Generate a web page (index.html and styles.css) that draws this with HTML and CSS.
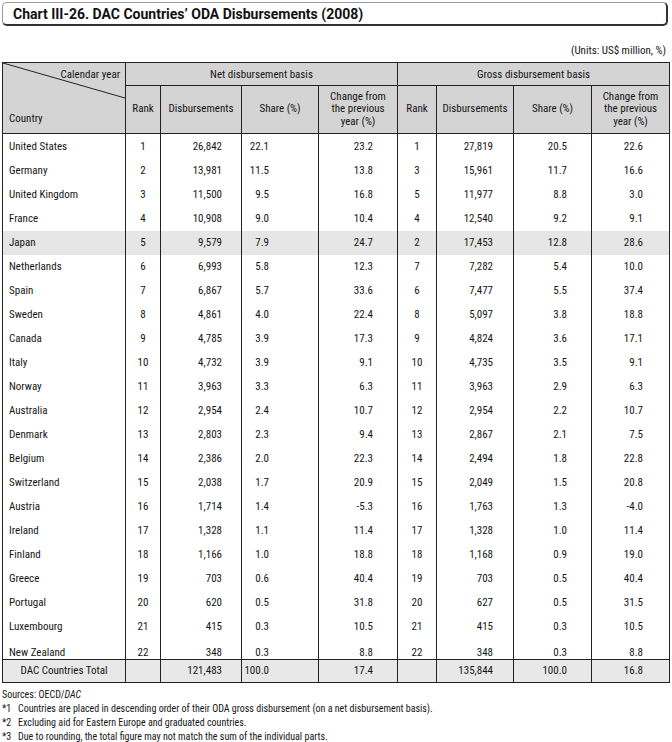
FILE: index.html
```html
<!DOCTYPE html>
<html>
<head>
<meta charset="utf-8">
<link rel="stylesheet" href="styles.css">
</head>
<body>
<div class="page">
  <div class="title-box"><h1 class="title">Chart III-26. DAC Countries’ ODA Disbursements (2008)</h1></div>
  <div class="units">(Units: US$ million, %)</div>
  <table class="oda">
    <colgroup>
      <col class="c-country"><col class="c-rank"><col class="c-disb"><col class="c-share"><col class="c-chg">
      <col class="c-rank2"><col class="c-disb2"><col class="c-share2"><col class="c-chg2">
    </colgroup>
    <thead>
      <tr class="h1">
        <th rowspan="2" class="corner">
          <svg class="diag" viewBox="0 0 100 100" preserveAspectRatio="none"><line x1="0" y1="0" x2="100" y2="50" stroke="#222" stroke-width="1" vector-effect="non-scaling-stroke"/></svg>
          <div class="corner-in"><span class="cy">Calendar year</span><span class="cc">Country</span></div>
        </th>
        <th colspan="4">Net disbursement basis</th>
        <th colspan="4">Gross disbursement basis</th>
      </tr>
      <tr class="h2">
        <th>Rank</th><th>Disbursements</th><th>Share (%)</th><th>Change from<br>the previous<br>year (%)</th>
        <th>Rank</th><th>Disbursements</th><th>Share (%)</th><th>Change from<br>the previous<br>year (%)</th>
      </tr>
    </thead>
    <tbody>
      <tr><td class="name">United States</td><td class="rk">1</td><td class="d1">26,842</td><td class="s1">22.1</td><td class="g1">23.2</td><td class="rk">1</td><td class="d2">27,819</td><td class="s2">20.5</td><td class="g2">22.6</td></tr>
      <tr><td class="name">Germany</td><td class="rk">2</td><td class="d1">13,981</td><td class="s1">11.5</td><td class="g1">13.8</td><td class="rk">3</td><td class="d2">15,961</td><td class="s2">11.7</td><td class="g2">16.6</td></tr>
      <tr><td class="name">United Kingdom</td><td class="rk">3</td><td class="d1">11,500</td><td class="s1">9.5</td><td class="g1">16.8</td><td class="rk">5</td><td class="d2">11,977</td><td class="s2">8.8</td><td class="g2">3.0</td></tr>
      <tr><td class="name">France</td><td class="rk">4</td><td class="d1">10,908</td><td class="s1">9.0</td><td class="g1">10.4</td><td class="rk">4</td><td class="d2">12,540</td><td class="s2">9.2</td><td class="g2">9.1</td></tr>
      <tr class="hl"><td class="name">Japan</td><td class="rk">5</td><td class="d1">9,579</td><td class="s1">7.9</td><td class="g1">24.7</td><td class="rk">2</td><td class="d2">17,453</td><td class="s2">12.8</td><td class="g2">28.6</td></tr>
      <tr><td class="name">Netherlands</td><td class="rk">6</td><td class="d1">6,993</td><td class="s1">5.8</td><td class="g1">12.3</td><td class="rk">7</td><td class="d2">7,282</td><td class="s2">5.4</td><td class="g2">10.0</td></tr>
      <tr><td class="name">Spain</td><td class="rk">7</td><td class="d1">6,867</td><td class="s1">5.7</td><td class="g1">33.6</td><td class="rk">6</td><td class="d2">7,477</td><td class="s2">5.5</td><td class="g2">37.4</td></tr>
      <tr><td class="name">Sweden</td><td class="rk">8</td><td class="d1">4,861</td><td class="s1">4.0</td><td class="g1">22.4</td><td class="rk">8</td><td class="d2">5,097</td><td class="s2">3.8</td><td class="g2">18.8</td></tr>
      <tr><td class="name">Canada</td><td class="rk">9</td><td class="d1">4,785</td><td class="s1">3.9</td><td class="g1">17.3</td><td class="rk">9</td><td class="d2">4,824</td><td class="s2">3.6</td><td class="g2">17.1</td></tr>
      <tr><td class="name">Italy</td><td class="rk">10</td><td class="d1">4,732</td><td class="s1">3.9</td><td class="g1">9.1</td><td class="rk">10</td><td class="d2">4,735</td><td class="s2">3.5</td><td class="g2">9.1</td></tr>
      <tr><td class="name">Norway</td><td class="rk">11</td><td class="d1">3,963</td><td class="s1">3.3</td><td class="g1">6.3</td><td class="rk">11</td><td class="d2">3,963</td><td class="s2">2.9</td><td class="g2">6.3</td></tr>
      <tr><td class="name">Australia</td><td class="rk">12</td><td class="d1">2,954</td><td class="s1">2.4</td><td class="g1">10.7</td><td class="rk">12</td><td class="d2">2,954</td><td class="s2">2.2</td><td class="g2">10.7</td></tr>
      <tr><td class="name">Denmark</td><td class="rk">13</td><td class="d1">2,803</td><td class="s1">2.3</td><td class="g1">9.4</td><td class="rk">13</td><td class="d2">2,867</td><td class="s2">2.1</td><td class="g2">7.5</td></tr>
      <tr><td class="name">Belgium</td><td class="rk">14</td><td class="d1">2,386</td><td class="s1">2.0</td><td class="g1">22.3</td><td class="rk">14</td><td class="d2">2,494</td><td class="s2">1.8</td><td class="g2">22.8</td></tr>
      <tr><td class="name">Switzerland</td><td class="rk">15</td><td class="d1">2,038</td><td class="s1">1.7</td><td class="g1">20.9</td><td class="rk">15</td><td class="d2">2,049</td><td class="s2">1.5</td><td class="g2">20.8</td></tr>
      <tr><td class="name">Austria</td><td class="rk">16</td><td class="d1">1,714</td><td class="s1">1.4</td><td class="g1">-5.3</td><td class="rk">16</td><td class="d2">1,763</td><td class="s2">1.3</td><td class="g2">-4.0</td></tr>
      <tr><td class="name">Ireland</td><td class="rk">17</td><td class="d1">1,328</td><td class="s1">1.1</td><td class="g1">11.4</td><td class="rk">17</td><td class="d2">1,328</td><td class="s2">1.0</td><td class="g2">11.4</td></tr>
      <tr><td class="name">Finland</td><td class="rk">18</td><td class="d1">1,166</td><td class="s1">1.0</td><td class="g1">18.8</td><td class="rk">18</td><td class="d2">1,168</td><td class="s2">0.9</td><td class="g2">19.0</td></tr>
      <tr><td class="name">Greece</td><td class="rk">19</td><td class="d1">703</td><td class="s1">0.6</td><td class="g1">40.4</td><td class="rk">19</td><td class="d2">703</td><td class="s2">0.5</td><td class="g2">40.4</td></tr>
      <tr><td class="name">Portugal</td><td class="rk">20</td><td class="d1">620</td><td class="s1">0.5</td><td class="g1">31.8</td><td class="rk">20</td><td class="d2">627</td><td class="s2">0.5</td><td class="g2">31.5</td></tr>
      <tr><td class="name">Luxembourg</td><td class="rk">21</td><td class="d1">415</td><td class="s1">0.3</td><td class="g1">10.5</td><td class="rk">21</td><td class="d2">415</td><td class="s2">0.3</td><td class="g2">10.5</td></tr>
      <tr class="last"><td class="name">New Zealand</td><td class="rk">22</td><td class="d1">348</td><td class="s1">0.3</td><td class="g1">8.8</td><td class="rk">22</td><td class="d2">348</td><td class="s2">0.3</td><td class="g2">8.8</td></tr>
    </tbody>
    <tfoot>
      <tr class="total"><td class="tname">DAC Countries Total</td><td class="rk"></td><td class="d1">121,483</td><td class="s1">100.0</td><td class="g1">17.4</td><td class="rk"></td><td class="d2">135,844</td><td class="s2">100.0</td><td class="g2">16.8</td></tr>
    </tfoot>
  </table>
  <div class="notes">
    <p class="src">Sources: OECD/<i>DAC</i></p>
    <p class="note"><span class="mk">*1</span><span>Countries are placed in descending order of their ODA gross disbursement (on a net disbursement basis).</span></p>
    <p class="note"><span class="mk">*2</span><span>Excluding aid for Eastern Europe and graduated countries.</span></p>
    <p class="note"><span class="mk">*3</span><span>Due to rounding, the total figure may not match the sum of the individual parts.</span></p>
  </div>
</div>
</body>
</html>
```

FILE: styles.css
```css
* { box-sizing: border-box; }
html, body { margin: 0; padding: 0; background: #fff; }
body { font-family: "Roboto Condensed", "Liberation Sans Narrow", "Arial Narrow", Roboto, sans-serif; color: #151515; }
.page { padding: 2px 4px 0 2px; width: 672px; }

.title-box {
  height: 24px;
  border: 1px solid #9a9a9a;
  border-right: 2px solid #333;
  border-bottom: 2px solid #333;
  border-radius: 5px;
  display: flex;
  align-items: center;
  padding-left: 10px;
}
.title { margin: 0; font-family: Roboto, "Liberation Sans", sans-serif; font-size: 14px; font-weight: 700; letter-spacing: 0; color: #111; }

.units { text-align: right; font-size: 11px; margin-top: 19px; height: 17px; line-height: 12px; padding-right: 2px; }

.oda { border-collapse: collapse; table-layout: fixed; width: 667px; font-size: 11px; border: 1.5px solid #222; }
.oda th, .oda td { border-left: 1px solid #222; border-right: 1px solid #222; padding: 0; }
.c-country { width: 123px; } .c-rank { width: 35px; } .c-disb { width: 81px; } .c-share { width: 77px; } .c-chg { width: 79px; }
.c-rank2 { width: 39px; } .c-disb2 { width: 77px; } .c-share2 { width: 78px; } .c-chg2 { width: 78px; }

.oda thead th { background: #d4d4d4; font-weight: 400; border: 1px solid #222; }
.h1 th { height: 23px; }
.h2 th { height: 48px; line-height: 12.5px; }
.corner { position: relative; padding: 0; }
.diag { position: absolute; left: 0; top: 0; width: 100%; height: 100%; }
.corner-in { display: flex; flex-direction: column; justify-content: space-between; height: 70px; padding: 5px 5px 8px 6px; }
.cy { align-self: flex-end; }
.cc { align-self: flex-start; }

.oda tbody td { height: 24px; }
.oda tbody tr:first-child td { height: 25px; }
.oda tbody tr.last td { height: 17px; vertical-align: top; padding-top: 7px; }
.hl td { background: #e6e6e6; }
.name { padding-left: 6px !important; text-align: left; }
.rk { text-align: center; }
.d1 { text-align: right; padding-right: 19px !important; }
.s1 { text-align: right; padding-right: 49px !important; }
.g1 { text-align: right; padding-right: 24px !important; }
.d2 { text-align: right; padding-right: 20px !important; }
.s2 { text-align: right; padding-right: 24px !important; }
.g2 { text-align: right; padding-right: 26px !important; }
.total td { background: #e8e8e8; height: 23px; border-top: 1px solid #222; }
.tname { text-align: center; }

.notes { margin-top: 5px; font-size: 10px; line-height: 14px; }
.notes p { margin: 0; }
.note { display: flex; }
.mk { width: 16px; flex: none; }
```
